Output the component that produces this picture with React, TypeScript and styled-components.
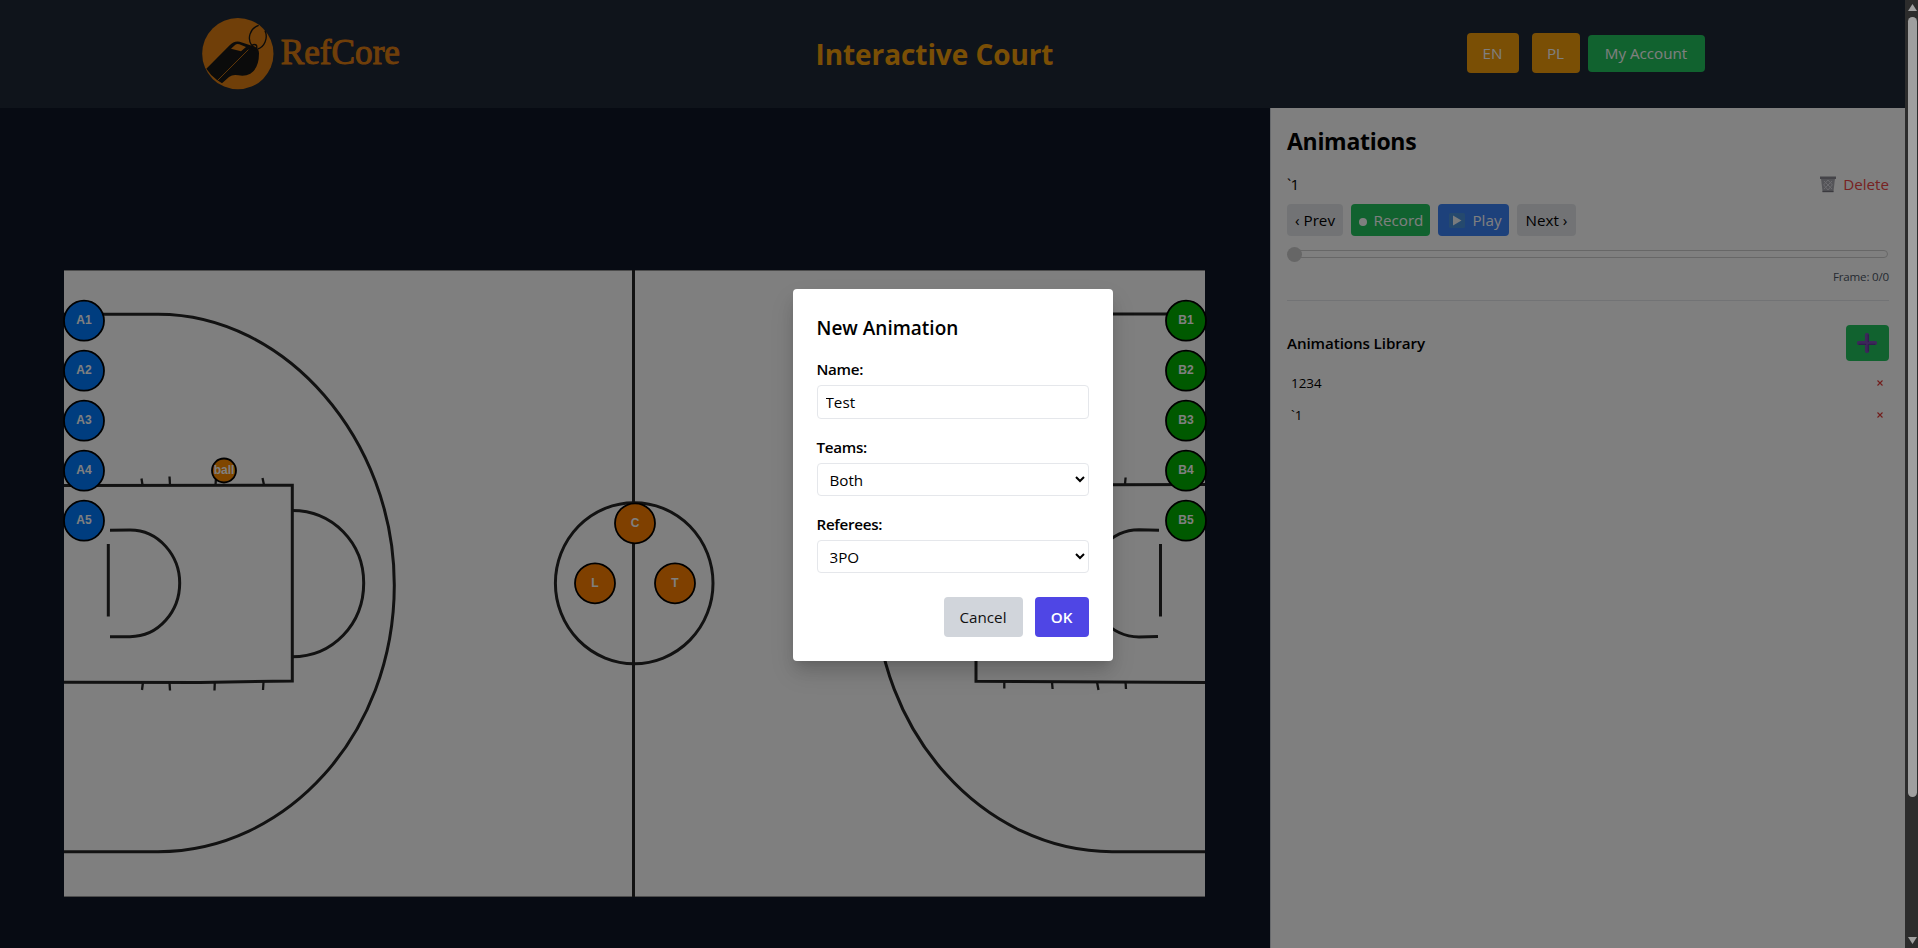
import React from "react";
import styled, { createGlobalStyle } from "styled-components";

const GlobalStyle = createGlobalStyle`
  *, *::before, *::after { box-sizing: border-box; }
  html, body { margin: 0; padding: 0; overflow: hidden; }
  body { background: #0f172a; }
  body, button, input, select { font-family: "Open Sans", "Noto Sans", sans-serif; font-size: 15.2px; }
  h1, h2, h3, p { margin: 0; }
`;

const Window = styled.div`
  display: flex;
  width: 1918px;
  height: 948px;
  overflow: hidden;
`;

const Viewport = styled.div`
  position: relative;
  width: 1905px;
  height: 948px;
  overflow: hidden;
  background: #0f1726;
`;

const Header = styled.header`
  height: 108px;
  background: #1f2937;
  display: flex;
  justify-content: center;
`;

const HeaderInner = styled.div`
  width: 1536px;
  padding: 0 16px;
  display: flex;
  align-items: center;
  justify-content: space-between;
`;

const Title = styled.h1`
  width: 237px;
  font-size: 28px;
  font-weight: 700;
  line-height: 36px;
  letter-spacing: -0.08px;
  white-space: nowrap;
  color: #f59e0b;
`;

const HeaderActions = styled.div`
  display: flex;
  align-items: center;
  padding-bottom: 2px;
`;

const HeaderButton = styled.button<{ $w: number; $h: number; $bg: string; $gap?: number }>`
  width: ${(p) => p.$w}px;
  height: ${(p) => p.$h}px;
  margin: 0 0 0 ${(p) => p.$gap ?? 0}px;
  padding: 0;
  border: 0;
  border-radius: 4px;
  background: ${(p) => p.$bg};
  color: #fff;
  white-space: nowrap;
`;

const Main = styled.main`
  display: flex;
  height: 951px;
`;

const CourtArea = styled.section`
  width: 1270px;
  padding-left: 64px;
  display: flex;
  align-items: center;
`;

const CourtSvg = styled.svg`
  display: block;
  flex: none;
  width: 1141px;
  height: 627px;
  background: #fff;
  overflow: visible;
`;

const Sidebar = styled.aside`
  width: 635px;
  padding: 16px;
  border-left: 1px solid #d1d5db;
  background: #fff;
  color: #000;
`;

const PanelTitle = styled.h2`
  font-size: 23px;
  line-height: 34px;
  font-weight: 700;
  letter-spacing: -0.3px;
  height: 32px;
  margin-bottom: 16px;
`;

const Row = styled.div`
  display: flex;
  align-items: center;
  justify-content: space-between;
`;

const CurrentName = styled.span`
  font-weight: 500;
  line-height: 24px;
  letter-spacing: -0.6px;
`;

const DeleteButton = styled.button`
  display: flex;
  align-items: center;
  gap: 7px;
  height: 24px;
  padding: 0;
  border: 0;
  background: none;
  color: #ef4444;
`;

const Controls = styled.div`
  display: flex;
  gap: 8px;
  margin-top: 8px;
`;

const ControlButton = styled.button<{ $w: number; $bg: string; $fg?: string; $shift?: number }>`
  width: ${(p) => p.$w}px;
  height: 32px;
  padding: 0 0 0 ${(p) => p.$shift ?? 0}px;
  border: 0;
  border-radius: 4px;
  display: flex;
  align-items: center;
  justify-content: center;
  gap: 7px;
  white-space: nowrap;
  background: ${(p) => p.$bg};
  color: ${(p) => p.$fg ?? "#000"};
`;

const Dot = styled.span`
  width: 8px;
  height: 8px;
  margin-top: 3px;
  border-radius: 50%;
  background: #fff;
`;

const Slider = styled.div`
  display: flex;
  align-items: center;
  height: 16px;
  margin-top: 10px;
`;

const Track = styled.div`
  flex: 1;
  height: 8px;
  margin: 0 1px;
  display: flex;
  align-items: center;
  border: 1px solid #cfcfcf;
  border-radius: 4px;
  background: #fff;
`;

const Thumb = styled.div`
  width: 15px;
  height: 15px;
  margin-left: -2px;
  flex: none;
  border-radius: 50%;
  background: #cdcdcd;
`;

const FrameInfo = styled.p`
  margin-top: 7px;
  font-size: 11.6px;
  line-height: 16px;
  letter-spacing: -0.2px;
  text-align: right;
  color: #4b5563;
`;

const Divider = styled.div`
  height: 1px;
  margin: 15px 0 24px;
  background: #e5e7eb;
`;

const LibraryTitle = styled.h3`
  font-size: 15.2px;
  font-weight: 600;
  line-height: 24px;
  letter-spacing: -0.1px;
`;

const AddButton = styled.button`
  width: 43px;
  height: 36px;
  padding: 0 2px 0 0;
  border: 0;
  border-radius: 4px;
  display: flex;
  align-items: center;
  justify-content: center;
  background: #22c55e;
`;

const Library = styled.div`
  margin-top: 6px;
`;

const LibraryItem = styled(Row)`
  height: 32px;
  padding: 0 4px;
  font-size: 13.4px;
`;

const CrossButton = styled.button`
  display: flex;
  align-items: center;
  justify-content: center;
  width: 10px;
  height: 16px;
  padding: 0;
  border: 0;
  background: none;
`;

const Overlay = styled.div`
  position: absolute;
  inset: 0;
  display: flex;
  align-items: center;
  justify-content: center;
  padding-top: 2px;
  background: rgba(0, 0, 0, 0.5);
`;

const Modal = styled.div`
  width: 320px;
  height: 372px;
  padding: 24px;
  border-radius: 4px;
  background: #fff;
  color: #000;
  box-shadow: 0 10px 15px -3px rgba(0, 0, 0, 0.1), 0 4px 6px -4px rgba(0, 0, 0, 0.1), 0 12px 24px rgba(0, 0, 0, 0.12);
`;

const ModalTitle = styled.h2`
  font-size: 19px;
  font-weight: 600;
  line-height: 30px;
  height: 28px;
  margin-bottom: 16px;
`;

const Field = styled.label`
  display: block;
  margin-bottom: 16px;
  font-weight: 600;
  line-height: 24px;
  letter-spacing: -0.3px;
`;

const fieldBox = `
  display: block;
  width: 100%;
  margin: 4px 0 0;
  border: 1px solid #e5e7eb;
  border-radius: 4px;
  background: #fff;
  color: #000;
  font-weight: 400;
  outline: none;
`;

const TextInput = styled.input`
  ${fieldBox}
  height: 34px;
  padding: 4px 8px;
`;

const Select = styled.select`
  ${fieldBox}
  height: 33px;
  padding: 4px 8px;
`;

const ModalActions = styled.div`
  display: flex;
  justify-content: flex-end;
  gap: 12px;
  margin-top: 24px;
`;

const ModalButton = styled.button<{ $w: number; $primary?: boolean }>`
  width: ${(p) => p.$w}px;
  height: 40px;
  padding: 0;
  border: 0;
  border-radius: 4px;
  font-weight: ${(p) => (p.$primary ? 600 : 400)};
  background: ${(p) => (p.$primary ? "#4f46e5" : "#d1d5db")};
  color: ${(p) => (p.$primary ? "#fff" : "#111")};
`;

const ScrollBar = styled.div`
  width: 13px;
  height: 948px;
  padding: 4px 1px 4px 3px;
  display: flex;
  flex-direction: column;
  align-items: center;
  justify-content: space-between;
  background: #2c2c2c;
`;

const ScrollThumb = styled.div`
  width: 9px;
  height: 780px;
  margin: 6px 0 auto;
  border-radius: 5px;
  background: #9f9f9f;
`;

const ticks: [number, number, number, number][] = [
  [141.5, 478.5, 142.5, 485], [169.5, 476.5, 170, 485], [216, 478, 215.5, 485], [262.5, 478, 264, 485],
  [143, 682, 142, 690], [169.5, 682, 170, 690.5], [214.8, 682, 214.5, 690.5], [263.5, 682, 263, 690],
  [1125.6, 477.5, 1125, 484], [1004.3, 682, 1004.3, 688.5], [1052, 682, 1052.6, 689], [1097, 682, 1098.5, 690], [1125.5, 682, 1126, 689],
];

const five = [0, 1, 2, 3, 4];
const tokens = [
  ...five.map((i) => ({ x: 84, y: 320.7 + i * 50, r: 20, c: "#007bff", t: `A${i + 1}` })),
  ...five.map((i) => ({ x: 1186, y: 320.7 + i * 50, r: 20, c: "#00b300", t: `B${i + 1}` })),
  { x: 595, y: 583.3, r: 20, c: "#ff8000", t: "L" },
  { x: 635, y: 523.3, r: 20, c: "#ff8000", t: "C" },
  { x: 675, y: 583.3, r: 20, c: "#ff8000", t: "T" },
  { x: 224, y: 470.5, r: 12, c: "#ff8c00", t: "ball" },
];

const Court = () => (
  <CourtSvg viewBox="64 270 1141 627">
    <g fill="none" stroke="#242424" strokeWidth="3">
      <path d="M64 270.5H1205M64 896.5H1205" stroke="#999" strokeWidth="1" />
      <path d="M633.5 270V897" />
      <ellipse cx="634.2" cy="583.2" rx="78.8" ry="80.5" />
      <path d="M64 314.3H158C286 314.3 394.3 440 394.3 585C394.3 735 286 851.7 158 851.7H64" />
      <path d="M64 485.6L292.3 485.2V681L200 682.4L64 682.3" />
      <path d="M292 510.5C333 510.5 363.7 543 363.7 583C363.7 624 333 656.8 292 656.8" />
      <path d="M110 530.3L130 530C159 530 179.7 556 179.7 583C179.7 611 159 636.7 130 636.7H110" />
      <path d="M108.3 544V616.5" />
      <path d="M1205 314H1112C980 314 875 440 875 584C875 734 985 851.7 1112 851.7H1205" />
      <path d="M1205 484.5L976 485V681.3L1205 682.4" />
      <path d="M1159 530.3L1139 529.8C1110 530 1089 556 1089 583C1089 611 1110 636.7 1139 636.9L1158 636.5" />
      <path d="M1160.5 544V616.5" />
      {ticks.map(([a, b, c, d], i) => (
        <path key={i} d={`M${a} ${b}L${c} ${d}`} strokeWidth="2.3" />
      ))}
    </g>
    {tokens.map((k) => (
      <g key={k.t}>
        <circle cx={k.x} cy={k.y} r={k.r} fill={k.c} stroke="#000" strokeWidth="1.8" />
        <text x={k.x} y={k.y + 3.3} textAnchor="middle" fontFamily="Liberation Sans, sans-serif" fontSize="12" fontWeight="700" fill="#fff">
          {k.t}
        </text>
      </g>
    ))}
  </CourtSvg>
);

const Logo = () => (
  <svg width="201" height="80" viewBox="64 42 603 240">
    <circle cx="174.5" cy="161" r="107" fill="#e07f12" />
    <path d="M80 206L150 136Q162 122 180 125L212 136Q238 140 238 160Q238 205 212 221Q196 230 176 226Q160 222 148 231L127 250L112 240Q92 225 80 206Z" fill="#161616" />
    <path d="M154 146L167 134Q172 130 179 133L199 141L184 154Z" fill="#e07f12" />
    <path d="M114 241L206 149" stroke="#e07f12" strokeWidth="2.5" fill="none" />
    <path d="M237 76C210 86 202 116 216 136M256 92C266 115 254 141 234 147" stroke="#161616" strokeWidth="4" fill="none" />
    <circle cx="224" cy="141" r="7.5" stroke="#161616" strokeWidth="4" fill="none" />
    <text x="303" y="192" fontFamily="Liberation Serif, serif" fontSize="108" textLength="358" lengthAdjust="spacingAndGlyphs" fill="#e07f12" stroke="#e07f12" strokeWidth="3">
      RefCore
    </text>
  </svg>
);

const TrashIcon = () => (
  <svg width="16" height="17" viewBox="0 0 16 17">
    <path d="M1 2.5H15L13.4 16H2.6Z" fill="#a9a8b0" />
    <path d="M0 .5H16V3H0Z" fill="#8b8992" />
    <path d="M4 5L12 13M8 4L12.5 9M3.8 9L8 14M12 5L4 13M8 4L3.5 9M12.2 9L8 14" stroke="#d8d7de" strokeWidth="1" />
    <path d="M2.5 15.5H13.5" stroke="#77757f" strokeWidth="1.4" />
  </svg>
);

const PlayIcon = () => (
  <svg width="16" height="15" viewBox="0 0 16 15">
    <rect width="16" height="15" rx="1.5" fill="#4a93dc" />
    <path d="M4 2.5L12.5 7.5L4 12.5Z" fill="#f3f6fb" />
  </svg>
);

const PlusIcon = () => (
  <svg width="20" height="20" viewBox="0 0 20 20">
    <path d="M10 2V18M2 10H18" stroke="#7a4fb5" strokeWidth="4.2" strokeLinecap="round" />
    <path d="M11.3 2V8.7M11.3 12V18M2 11.3H8.7M12 11.3H18" stroke="#5f3b98" strokeWidth="1.3" strokeLinecap="round" />
  </svg>
);

const Cross = () => (
  <svg width="6" height="6" viewBox="0 0 6 6">
    <path d="M.5 .5L5.5 5.5M5.5 .5L.5 5.5" stroke="#e53935" strokeWidth="1.1" />
  </svg>
);

export default function App() {
  return (
    <Window>
      <GlobalStyle />
      <Viewport>
        <Header>
          <HeaderInner>
            <Logo />
            <Title>Interactive Court</Title>
            <HeaderActions>
              <HeaderButton $w={52} $h={40} $bg="#f59e0b">EN</HeaderButton>
              <HeaderButton $w={48} $h={40} $bg="#f59e0b" $gap={13}>PL</HeaderButton>
              <HeaderButton $w={117} $h={37} $bg="#22c55e" $gap={8}>My Account</HeaderButton>
            </HeaderActions>
          </HeaderInner>
        </Header>
        <Main>
          <CourtArea>
            <Court />
          </CourtArea>
          <Sidebar>
            <PanelTitle>Animations</PanelTitle>
            <Row>
              <CurrentName>`1</CurrentName>
              <DeleteButton><TrashIcon /> Delete</DeleteButton>
            </Row>
            <Controls>
              <ControlButton $w={56} $bg="#e5e7eb">‹ Prev</ControlButton>
              <ControlButton $w={79} $bg="#22c55e" $fg="#fff" $shift={1}><Dot />Record</ControlButton>
              <ControlButton $w={71} $bg="#3b82f6" $fg="#fff" $shift={4}><PlayIcon />Play</ControlButton>
              <ControlButton $w={59} $bg="#e5e7eb">Next ›</ControlButton>
            </Controls>
            <Slider>
              <Track><Thumb /></Track>
            </Slider>
            <FrameInfo>Frame: 0/0</FrameInfo>
            <Divider />
            <Row>
              <LibraryTitle>Animations Library</LibraryTitle>
              <AddButton><PlusIcon /></AddButton>
            </Row>
            <Library>
              <LibraryItem><span>1234</span><CrossButton><Cross /></CrossButton></LibraryItem>
              <LibraryItem><span>`1</span><CrossButton><Cross /></CrossButton></LibraryItem>
            </Library>
          </Sidebar>
        </Main>
        <Overlay>
          <Modal>
            <ModalTitle>New Animation</ModalTitle>
            <Field>
              Name:
              <TextInput defaultValue="Test" />
            </Field>
            <Field>
              Teams:
              <Select defaultValue="Both"><option>Both</option></Select>
            </Field>
            <Field>
              Referees:
              <Select defaultValue="3PO"><option>3PO</option></Select>
            </Field>
            <ModalActions>
              <ModalButton $w={79}>Cancel</ModalButton>
              <ModalButton $w={54} $primary>OK</ModalButton>
            </ModalActions>
          </Modal>
        </Overlay>
      </Viewport>
      <ScrollBar>
        <svg width="9" height="7" viewBox="0 0 9 7"><path d="M4.5 0L9 7H0Z" fill="#9f9f9f" /></svg>
        <ScrollThumb />
        <svg width="9" height="7" viewBox="0 0 9 7"><path d="M0 0H9L4.5 7Z" fill="#9f9f9f" /></svg>
      </ScrollBar>
    </Window>
  );
}
